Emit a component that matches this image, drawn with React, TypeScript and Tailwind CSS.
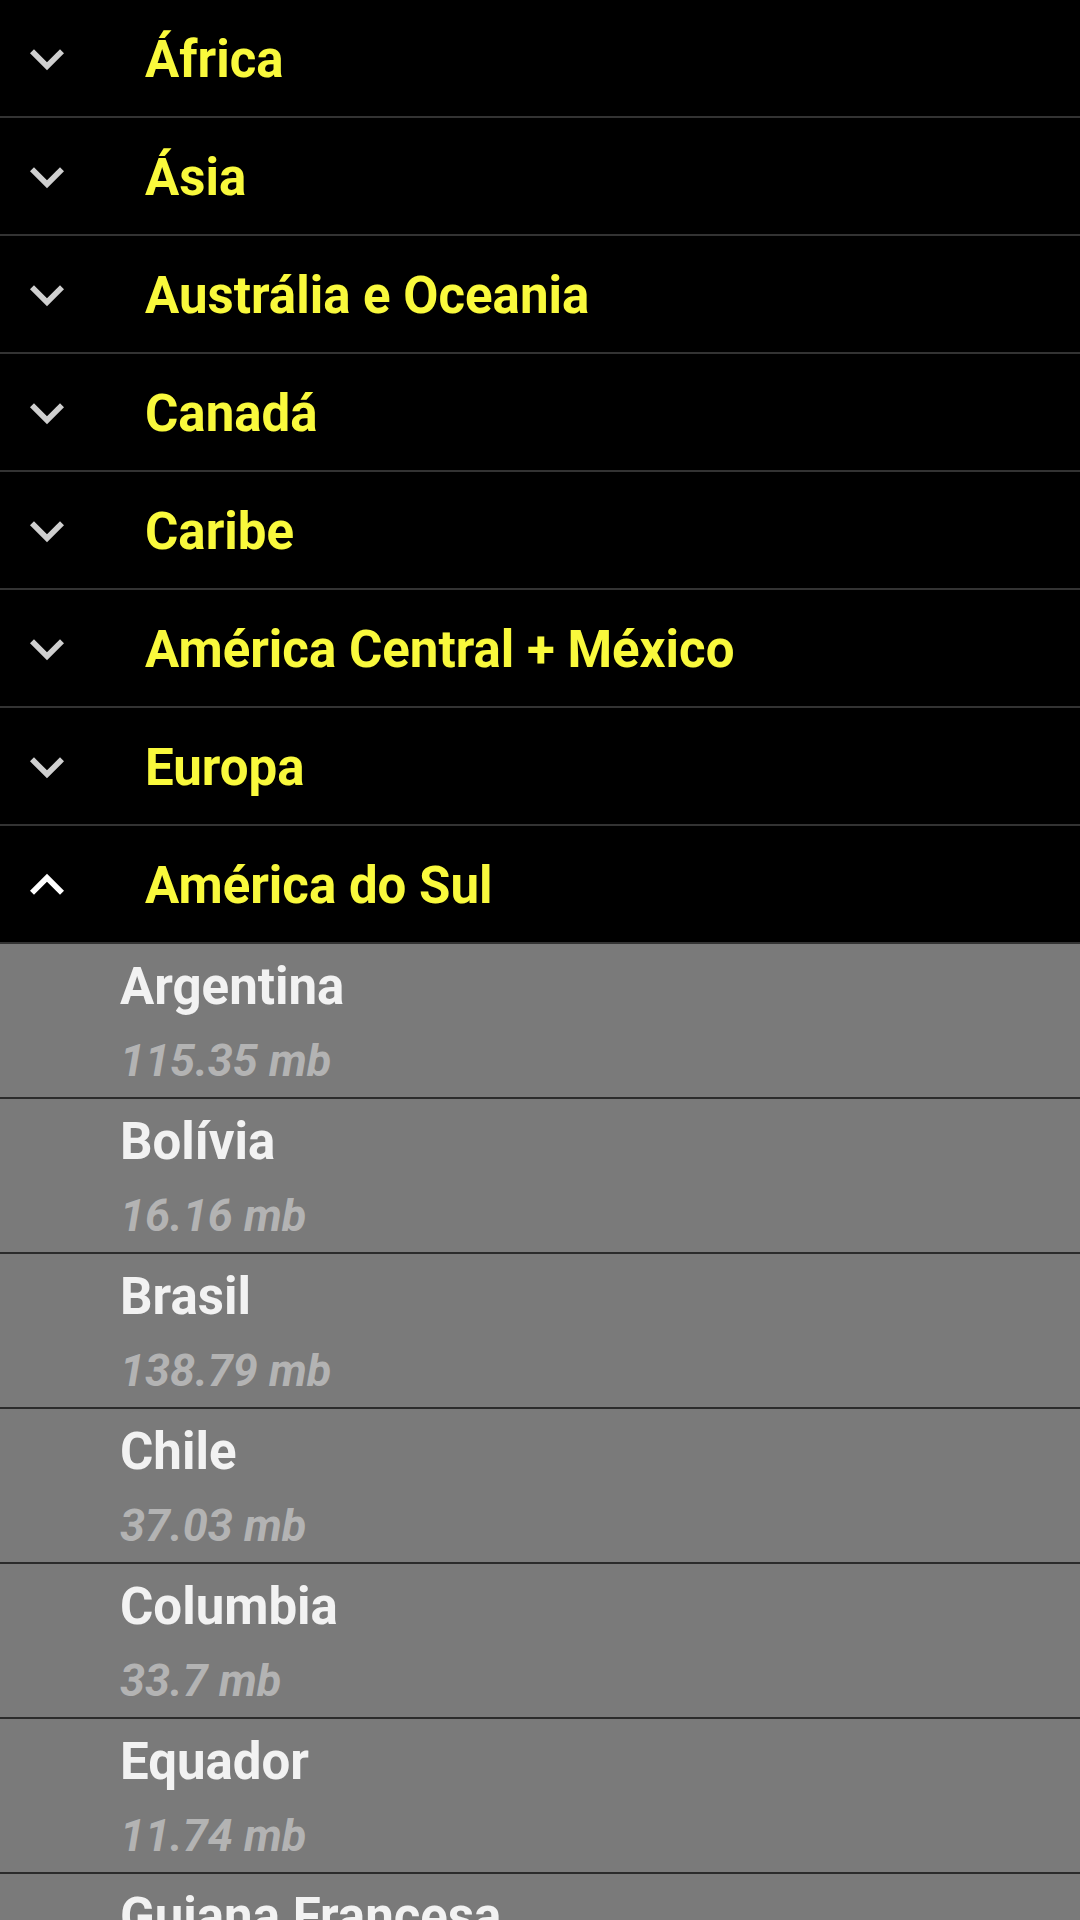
import React from "react";

const regions = [
  "África",
  "Ásia",
  "Austrália e Oceania",
  "Canadá",
  "Caribe",
  "América Central + México",
  "Europa",
];

const countries: [string, string][] = [
  ["Argentina", "115.35 mb"],
  ["Bolívia", "16.16 mb"],
  ["Brasil", "138.79 mb"],
  ["Chile", "37.03 mb"],
  ["Columbia", "33.7 mb"],
  ["Equador", "11.74 mb"],
  ["Guiana Francesa", "9.12 mb"],
];

function Chevron({ up }: { up?: boolean }) {
  return (
    <svg
      viewBox="0 0 24 24"
      className={up ? "w-[68px] h-[68px] fill-white" : "w-[68px] h-[68px] fill-[#cfcfcf]"}
    >
      {up ? (
        <path d="M7.41 15.41L12 10.83l4.59 4.58L18 14l-6-6-6 6z" />
      ) : (
        <path d="M16.59 8.59L12 13.17 7.41 8.59 6 10l6 6 6-6z" />
      )}
    </svg>
  );
}

function Header({ title, up }: { title: string; up?: boolean }) {
  return (
    <div className="flex items-center h-[118px] border-b-2 border-[#333333] bg-black">
      <div className="ml-[13px] mt-[2px]">
        <Chevron up={up} />
      </div>
      <div className="ml-[64px] mt-[2px] text-[51px] leading-none font-bold text-[#f9f93c]">
        {title}
      </div>
    </div>
  );
}

export default function App() {
  return (
    <div
      className="w-[1080px] h-[1920px] overflow-hidden bg-black"
      style={{ fontFamily: "Roboto, 'Noto Sans', sans-serif" }}
    >
      {regions.map((r) => (
        <Header key={r} title={r} />
      ))}
      <Header title="América do Sul" up />
      {countries.map(([name, size]) => (
        <div
          key={name}
          className="flex flex-col h-[155px] bg-[#7a7a7a] border-b-2 border-[#2b2b2b] pl-[120px] pt-[14px]"
        >
          <div className="text-[51px] leading-[58px] font-bold text-[#f2f2f2]">{name}</div>
          <div className="mt-[18px] text-[45px] leading-[54px] font-bold italic text-[#b3b3b3]">
            {size}
          </div>
        </div>
      ))}
    </div>
  );
}
